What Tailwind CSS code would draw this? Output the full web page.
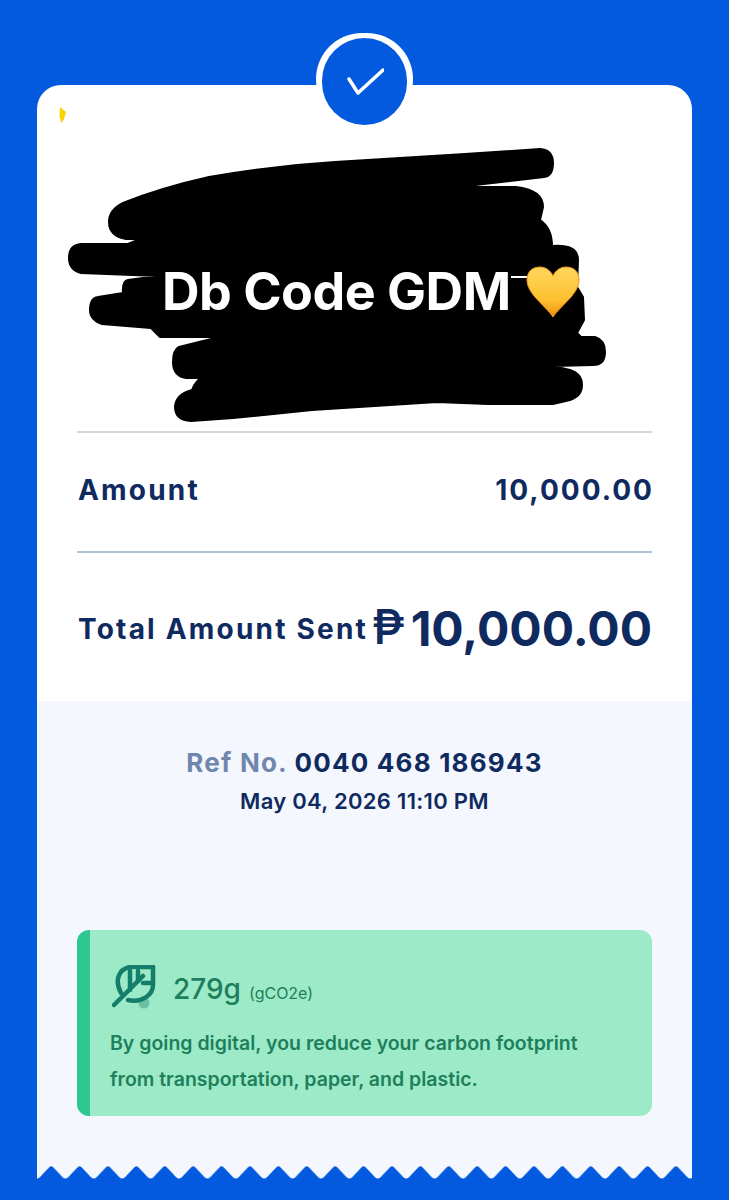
<!DOCTYPE html>
<html lang="en">
<head>
    <meta charset="UTF-8">
    <meta name="viewport" content="width=device-width, initial-scale=1.0">
    <title>Transfer Receipt</title>
    <script src="https://cdn.jsdelivr.net/npm/@tailwindcss/browser@4"></script>
</head>
<body class="bg-[#035ade] h-[1200px] overflow-hidden font-['Inter',sans-serif]">
    <div class="relative pt-[85px] px-[37px]">
        <!-- Receipt -->
        <div class="rounded-t-[24px] overflow-hidden">
            <div class="relative bg-white h-[616px] px-[40px]">
                <svg class="absolute left-[20px] top-[20px]" width="12" height="20" viewBox="0 0 12 20"><path d="M3 2 L9 7 L7 14 L4.500 18 L2.500 12 Z" fill="#fdd000"/></svg>

                <!-- Redaction scribble -->
                <svg class="absolute left-0 top-0" width="655" height="345" viewBox="37 85 655 345">
                    <path fill="#000" stroke="#000" stroke-width="2" stroke-linejoin="round" d="M540 149 Q553 150 553 163 Q553 176 544 177 L458 187 L516 187 Q543 190 543 207 L540 220 Q552 228 552 246 Q578 244 578 260 L577 287 L583 297 L584 320 L577 333 L581 337 L595 337 Q605 340 605 352 Q605 365 593 365 L553 366 L570 370 Q582 374 582 385 Q582 396 570 400 L553 404 L488 404 L437 402 L312 410 L233 418 L191 421 Q175 420 175 407 Q176 394 192 390 Q196 380 202 378 L186 378 Q173 376 173 362 Q173 350 179 347 L219 337 L160 337 L151 328 L102 324 Q90 320 90 310 Q90 298 98 297 L123 293 Q122 281 128 280 L158 276 L81 273 Q69 270 69 258 Q69 245 81 244 L128 244 L140 239 L126 239 Q109 236 109 222 Q109 210 123 203 Q160 188 209 177 Q270 166 335 162 L465 154 Z"/>
                </svg>

                <!-- Name label -->
                <div class="absolute left-[125px] top-[177px] flex items-center">
                    <span class="text-white text-[52px] leading-[60px] font-bold tracking-[-0.5px]">Db Code GDM</span>
                    <span class="w-[16px] h-[2px] bg-white -mt-[30px]"></span>
                    <svg class="-ml-[1px] -mt-[1px]" width="54" height="52" viewBox="0 0 54 52">
                        <defs>
                            <linearGradient id="heart" x1="0" y1="0" x2="0" y2="1">
                                <stop offset="0" stop-color="#ffd75c"/>
                                <stop offset="0.65" stop-color="#fdc130"/>
                                <stop offset="1" stop-color="#ef8f12"/>
                            </linearGradient>
                        </defs>
                        <path d="M27 51 C19 39 1 28 1 14 C1 5 7 1 14 1 C20 1 25 5 27 10 C29 5 34 1 40 1 C47 1 53 5 53 14 C53 28 35 39 27 51 Z" fill="url(#heart)" stroke="#ec9a1e" stroke-width="1"/>
                    </svg>
                </div>

                <div class="pt-[346px]">
                    <div class="h-[2px] bg-[#d3d6db]"></div>
                    <div class="flex items-center justify-between h-[118px] pb-[5px] text-[#0f2a5f] text-[28px] font-bold">
                        <span class="tracking-[2.2px] pl-[1px]">Amount</span>
                        <span class="tracking-[2px] -mr-[2px]">10,000.00</span>
                    </div>
                    <div class="h-[2px] bg-[#aebfdc]"></div>
                    <div class="flex items-center justify-between h-[152px] text-[#0f2a5f]">
                        <span class="text-[28px] font-bold tracking-[2.2px] pl-[1px]">Total Amount Sent</span>
                        <span class="flex items-center gap-[6px] leading-none">
                            <span class="text-[48px] font-medium -mt-[5px]">₱</span>
                            <span class="text-[48px] font-bold">10,000.00</span>
                        </span>
                    </div>
                </div>
            </div>

            <div class="bg-[#f4f7fe] h-[486px] px-[40px] relative">
                <div class="pt-[45px] text-center">
                    <p class="text-[26px] leading-[34px] font-bold tracking-[1.2px] text-[#0f2a5f]"><span class="text-[#6f86ad]">Ref No.</span> 0040 468 186943</p>
                    <p class="mt-[7px] text-[22px] leading-[28px] font-semibold tracking-[0.3px] text-[#0f2a5f]">May 04, 2026 11:10 PM</p>
                </div>

                <!-- Carbon card -->
                <div class="mt-[115px] h-[186px] rounded-[12px] bg-[#9deac8] border-l-[13px] border-[#2dc78f] pl-[20px] pt-[35px]">
                    <div class="flex items-center h-[44px]">
                        <svg class="ml-[2px]" width="44" height="44" viewBox="0 0 44 44" fill="none" stroke="#137e6a" stroke-width="4.500" stroke-linecap="round" stroke-linejoin="round">
                            <circle cx="32" cy="38" r="5.500" fill="#6bbfa5" stroke="none"/>
                            <path d="M41 2 L18 2 C7 4 2 15 9 28"/>
                            <path d="M41 2 L41 20 C41 30 30 38 16 35"/>
                            <path d="M31 18 L41 18"/>
                            <path d="M18 6 L18 25"/>
                            <path d="M26 6 L26 16"/>
                            <path d="M2 40 L31 11"/>
                        </svg>
                        <div class="ml-[17px] mt-[3px] flex items-baseline gap-[8px] text-[#1d7f5b]">
                            <span class="text-[28px] font-medium">279g</span>
                            <span class="text-[16px]">(gCO2e)</span>
                        </div>
                    </div>
                    <p class="mt-[16px] text-[19.5px] leading-[36px] font-semibold text-[#1d7f5b]">By going digital, you reduce your carbon footprint<br>from transportation, paper, and plastic.</p>
                </div>

                <!-- Torn edge -->
                <svg class="absolute left-0 bottom-0" width="655" height="22" viewBox="0 0 655 22">
                    <defs>
                        <pattern id="zig" width="28.4" height="22" patternUnits="userSpaceOnUse">
                            <path d="M0 13.500 Q1.500 13.500 3 12 L12 2.500 Q14.200 0 16.400 2.500 L25.400 12 Q26.900 13.500 28.400 13.500 L28.400 22 L0 22 Z" fill="#035ade"/>
                        </pattern>
                    </defs>
                    <rect width="655" height="22" fill="url(#zig)"/>
                </svg>
            </div>
        </div>

        <!-- Check badge -->
        <div class="absolute left-[316px] top-[33px] w-[97px] h-[92px] rounded-full bg-white"></div>
        <div class="absolute left-[322px] top-[38px] w-[85px] h-[87px] rounded-full bg-[#035ade] flex items-center justify-center">
            <svg width="38" height="30" viewBox="0 0 38 30" fill="none" stroke="white" stroke-width="3.5" stroke-linecap="round" stroke-linejoin="round"><path d="M3 12 L12 26 L37 3"/></svg>
        </div>
    </div>
</body>
</html>
